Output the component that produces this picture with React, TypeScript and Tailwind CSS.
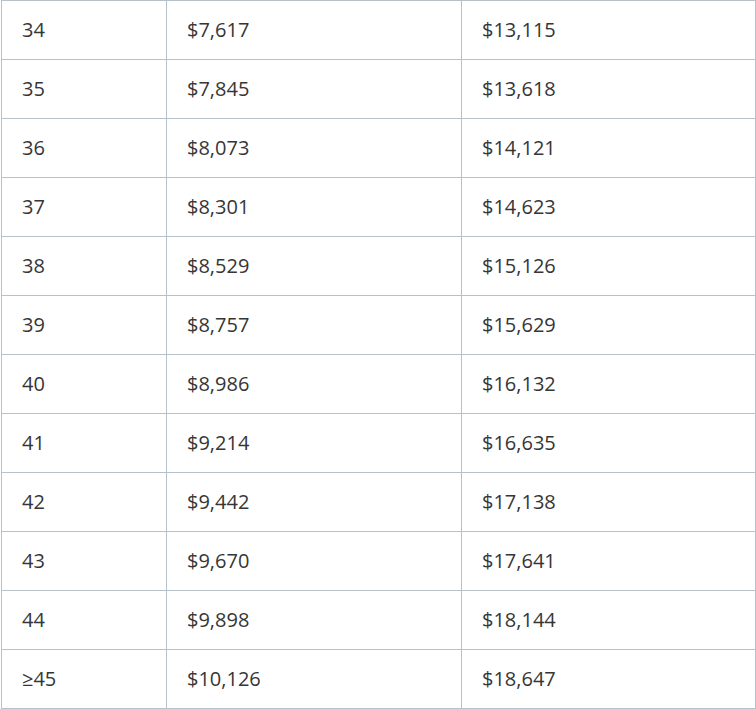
const rows: [string, string, string][] = [
  ['34', '$7,617', '$13,115'],
  ['35', '$7,845', '$13,618'],
  ['36', '$8,073', '$14,121'],
  ['37', '$8,301', '$14,623'],
  ['38', '$8,529', '$15,126'],
  ['39', '$8,757', '$15,629'],
  ['40', '$8,986', '$16,132'],
  ['41', '$9,214', '$16,635'],
  ['42', '$9,442', '$17,138'],
  ['43', '$9,670', '$17,641'],
  ['44', '$9,898', '$18,144'],
  ['≥45', '$10,126', '$18,647'],
];

export default function App() {
  return (
    <div className="min-h-screen bg-white">
      <div
        className="ml-px w-[755px] border-l border-t border-[#b6c1ca] text-[20px] text-[#363636]"
        style={{ fontFamily: '"Open Sans", sans-serif' }}
      >
        {rows.map(([age, a, b]) => (
          <div key={age} className="flex h-[59px] border-b border-[#b6c1ca]">
            <div className="flex w-[165px] items-center border-r border-[#b6c1ca] pl-5">{age}</div>
            <div className="flex w-[295px] items-center border-r border-[#b6c1ca] pl-5">{a}</div>
            <div className="flex w-[294px] items-center border-r border-[#b6c1ca] pl-5">{b}</div>
          </div>
        ))}
      </div>
    </div>
  );
}
